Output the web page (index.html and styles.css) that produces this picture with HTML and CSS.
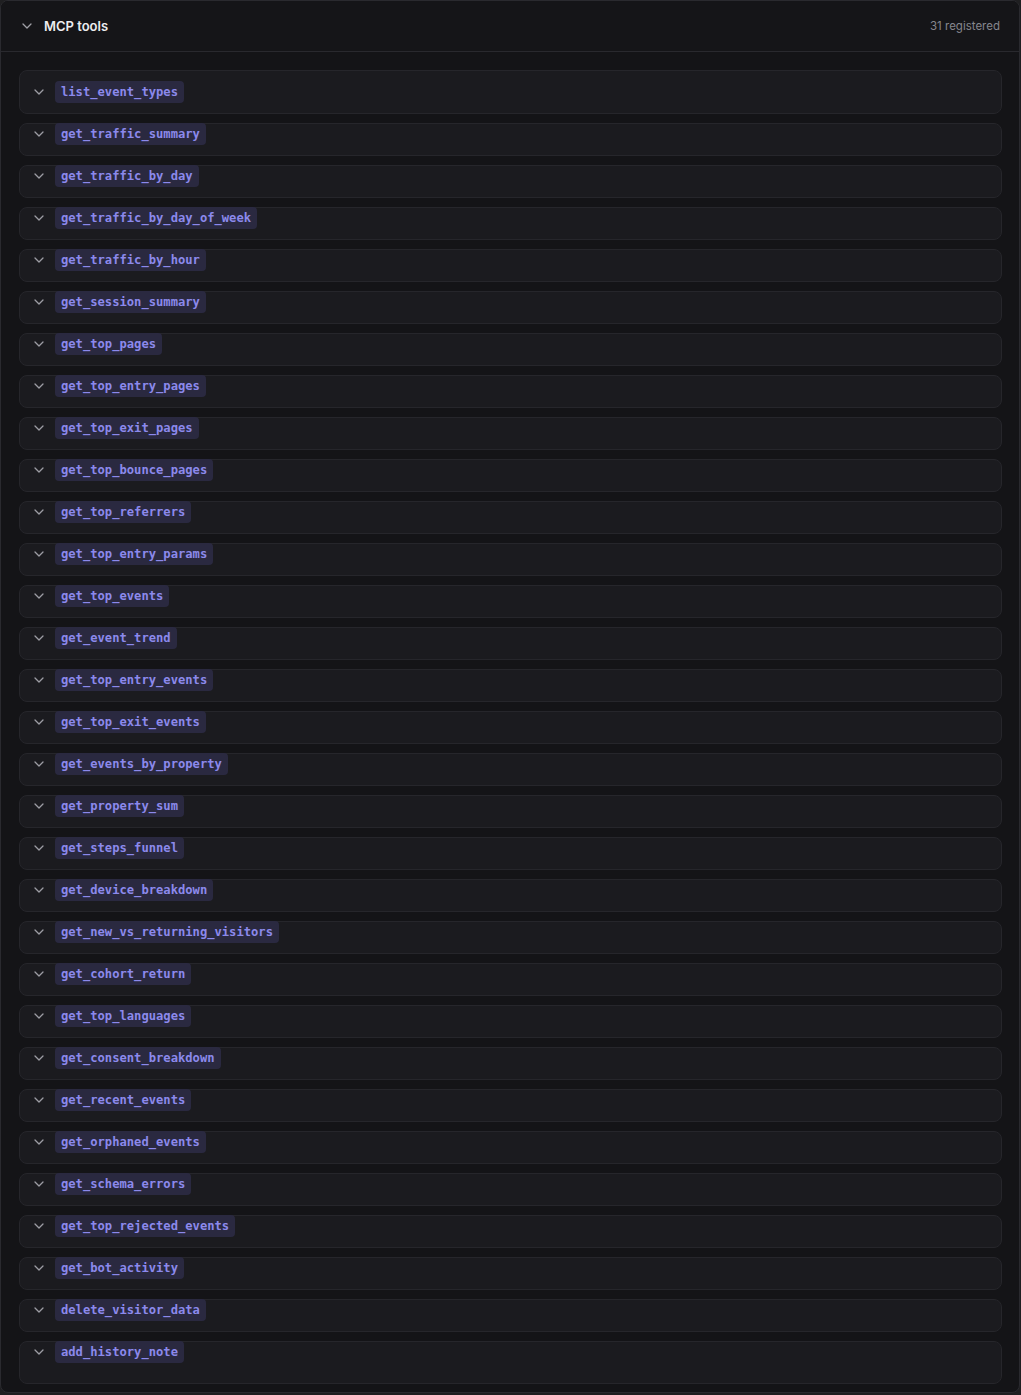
FILE: index.html
```html
<!DOCTYPE html>
<html lang="en">
<head>
<meta charset="utf-8">
<title>MCP tools</title>
<link rel="stylesheet" href="styles.css">
</head>
<body>
<section class="panel">
  <header class="panel-head">
    <svg class="chev" viewBox="0 0 10 6" width="10" height="6"><path d="M1 1l4 4 4-4" fill="none" stroke="currentColor" stroke-width="1.3" stroke-linecap="round" stroke-linejoin="round"/></svg>
    <h2 class="panel-title">MCP tools</h2>
    <span class="panel-count">31 registered</span>
  </header>
  <ul class="tool-list">
    <li class="tool"><div class="tool-row"><svg class="chev" viewBox="0 0 10 6" width="10" height="6"><path d="M1 1l4 4 4-4" fill="none" stroke="currentColor" stroke-width="1.3" stroke-linecap="round" stroke-linejoin="round"/></svg><code class="tool-name">list_event_types</code></div></li>
    <li class="tool"><div class="tool-row"><svg class="chev" viewBox="0 0 10 6" width="10" height="6"><path d="M1 1l4 4 4-4" fill="none" stroke="currentColor" stroke-width="1.3" stroke-linecap="round" stroke-linejoin="round"/></svg><code class="tool-name">get_traffic_summary</code></div></li>
    <li class="tool"><div class="tool-row"><svg class="chev" viewBox="0 0 10 6" width="10" height="6"><path d="M1 1l4 4 4-4" fill="none" stroke="currentColor" stroke-width="1.3" stroke-linecap="round" stroke-linejoin="round"/></svg><code class="tool-name">get_traffic_by_day</code></div></li>
    <li class="tool"><div class="tool-row"><svg class="chev" viewBox="0 0 10 6" width="10" height="6"><path d="M1 1l4 4 4-4" fill="none" stroke="currentColor" stroke-width="1.3" stroke-linecap="round" stroke-linejoin="round"/></svg><code class="tool-name">get_traffic_by_day_of_week</code></div></li>
    <li class="tool"><div class="tool-row"><svg class="chev" viewBox="0 0 10 6" width="10" height="6"><path d="M1 1l4 4 4-4" fill="none" stroke="currentColor" stroke-width="1.3" stroke-linecap="round" stroke-linejoin="round"/></svg><code class="tool-name">get_traffic_by_hour</code></div></li>
    <li class="tool"><div class="tool-row"><svg class="chev" viewBox="0 0 10 6" width="10" height="6"><path d="M1 1l4 4 4-4" fill="none" stroke="currentColor" stroke-width="1.3" stroke-linecap="round" stroke-linejoin="round"/></svg><code class="tool-name">get_session_summary</code></div></li>
    <li class="tool"><div class="tool-row"><svg class="chev" viewBox="0 0 10 6" width="10" height="6"><path d="M1 1l4 4 4-4" fill="none" stroke="currentColor" stroke-width="1.3" stroke-linecap="round" stroke-linejoin="round"/></svg><code class="tool-name">get_top_pages</code></div></li>
    <li class="tool"><div class="tool-row"><svg class="chev" viewBox="0 0 10 6" width="10" height="6"><path d="M1 1l4 4 4-4" fill="none" stroke="currentColor" stroke-width="1.3" stroke-linecap="round" stroke-linejoin="round"/></svg><code class="tool-name">get_top_entry_pages</code></div></li>
    <li class="tool"><div class="tool-row"><svg class="chev" viewBox="0 0 10 6" width="10" height="6"><path d="M1 1l4 4 4-4" fill="none" stroke="currentColor" stroke-width="1.3" stroke-linecap="round" stroke-linejoin="round"/></svg><code class="tool-name">get_top_exit_pages</code></div></li>
    <li class="tool"><div class="tool-row"><svg class="chev" viewBox="0 0 10 6" width="10" height="6"><path d="M1 1l4 4 4-4" fill="none" stroke="currentColor" stroke-width="1.3" stroke-linecap="round" stroke-linejoin="round"/></svg><code class="tool-name">get_top_bounce_pages</code></div></li>
    <li class="tool"><div class="tool-row"><svg class="chev" viewBox="0 0 10 6" width="10" height="6"><path d="M1 1l4 4 4-4" fill="none" stroke="currentColor" stroke-width="1.3" stroke-linecap="round" stroke-linejoin="round"/></svg><code class="tool-name">get_top_referrers</code></div></li>
    <li class="tool"><div class="tool-row"><svg class="chev" viewBox="0 0 10 6" width="10" height="6"><path d="M1 1l4 4 4-4" fill="none" stroke="currentColor" stroke-width="1.3" stroke-linecap="round" stroke-linejoin="round"/></svg><code class="tool-name">get_top_entry_params</code></div></li>
    <li class="tool"><div class="tool-row"><svg class="chev" viewBox="0 0 10 6" width="10" height="6"><path d="M1 1l4 4 4-4" fill="none" stroke="currentColor" stroke-width="1.3" stroke-linecap="round" stroke-linejoin="round"/></svg><code class="tool-name">get_top_events</code></div></li>
    <li class="tool"><div class="tool-row"><svg class="chev" viewBox="0 0 10 6" width="10" height="6"><path d="M1 1l4 4 4-4" fill="none" stroke="currentColor" stroke-width="1.3" stroke-linecap="round" stroke-linejoin="round"/></svg><code class="tool-name">get_event_trend</code></div></li>
    <li class="tool"><div class="tool-row"><svg class="chev" viewBox="0 0 10 6" width="10" height="6"><path d="M1 1l4 4 4-4" fill="none" stroke="currentColor" stroke-width="1.3" stroke-linecap="round" stroke-linejoin="round"/></svg><code class="tool-name">get_top_entry_events</code></div></li>
    <li class="tool"><div class="tool-row"><svg class="chev" viewBox="0 0 10 6" width="10" height="6"><path d="M1 1l4 4 4-4" fill="none" stroke="currentColor" stroke-width="1.3" stroke-linecap="round" stroke-linejoin="round"/></svg><code class="tool-name">get_top_exit_events</code></div></li>
    <li class="tool"><div class="tool-row"><svg class="chev" viewBox="0 0 10 6" width="10" height="6"><path d="M1 1l4 4 4-4" fill="none" stroke="currentColor" stroke-width="1.3" stroke-linecap="round" stroke-linejoin="round"/></svg><code class="tool-name">get_events_by_property</code></div></li>
    <li class="tool"><div class="tool-row"><svg class="chev" viewBox="0 0 10 6" width="10" height="6"><path d="M1 1l4 4 4-4" fill="none" stroke="currentColor" stroke-width="1.3" stroke-linecap="round" stroke-linejoin="round"/></svg><code class="tool-name">get_property_sum</code></div></li>
    <li class="tool"><div class="tool-row"><svg class="chev" viewBox="0 0 10 6" width="10" height="6"><path d="M1 1l4 4 4-4" fill="none" stroke="currentColor" stroke-width="1.3" stroke-linecap="round" stroke-linejoin="round"/></svg><code class="tool-name">get_steps_funnel</code></div></li>
    <li class="tool"><div class="tool-row"><svg class="chev" viewBox="0 0 10 6" width="10" height="6"><path d="M1 1l4 4 4-4" fill="none" stroke="currentColor" stroke-width="1.3" stroke-linecap="round" stroke-linejoin="round"/></svg><code class="tool-name">get_device_breakdown</code></div></li>
    <li class="tool"><div class="tool-row"><svg class="chev" viewBox="0 0 10 6" width="10" height="6"><path d="M1 1l4 4 4-4" fill="none" stroke="currentColor" stroke-width="1.3" stroke-linecap="round" stroke-linejoin="round"/></svg><code class="tool-name">get_new_vs_returning_visitors</code></div></li>
    <li class="tool"><div class="tool-row"><svg class="chev" viewBox="0 0 10 6" width="10" height="6"><path d="M1 1l4 4 4-4" fill="none" stroke="currentColor" stroke-width="1.3" stroke-linecap="round" stroke-linejoin="round"/></svg><code class="tool-name">get_cohort_return</code></div></li>
    <li class="tool"><div class="tool-row"><svg class="chev" viewBox="0 0 10 6" width="10" height="6"><path d="M1 1l4 4 4-4" fill="none" stroke="currentColor" stroke-width="1.3" stroke-linecap="round" stroke-linejoin="round"/></svg><code class="tool-name">get_top_languages</code></div></li>
    <li class="tool"><div class="tool-row"><svg class="chev" viewBox="0 0 10 6" width="10" height="6"><path d="M1 1l4 4 4-4" fill="none" stroke="currentColor" stroke-width="1.3" stroke-linecap="round" stroke-linejoin="round"/></svg><code class="tool-name">get_consent_breakdown</code></div></li>
    <li class="tool"><div class="tool-row"><svg class="chev" viewBox="0 0 10 6" width="10" height="6"><path d="M1 1l4 4 4-4" fill="none" stroke="currentColor" stroke-width="1.3" stroke-linecap="round" stroke-linejoin="round"/></svg><code class="tool-name">get_recent_events</code></div></li>
    <li class="tool"><div class="tool-row"><svg class="chev" viewBox="0 0 10 6" width="10" height="6"><path d="M1 1l4 4 4-4" fill="none" stroke="currentColor" stroke-width="1.3" stroke-linecap="round" stroke-linejoin="round"/></svg><code class="tool-name">get_orphaned_events</code></div></li>
    <li class="tool"><div class="tool-row"><svg class="chev" viewBox="0 0 10 6" width="10" height="6"><path d="M1 1l4 4 4-4" fill="none" stroke="currentColor" stroke-width="1.3" stroke-linecap="round" stroke-linejoin="round"/></svg><code class="tool-name">get_schema_errors</code></div></li>
    <li class="tool"><div class="tool-row"><svg class="chev" viewBox="0 0 10 6" width="10" height="6"><path d="M1 1l4 4 4-4" fill="none" stroke="currentColor" stroke-width="1.3" stroke-linecap="round" stroke-linejoin="round"/></svg><code class="tool-name">get_top_rejected_events</code></div></li>
    <li class="tool"><div class="tool-row"><svg class="chev" viewBox="0 0 10 6" width="10" height="6"><path d="M1 1l4 4 4-4" fill="none" stroke="currentColor" stroke-width="1.3" stroke-linecap="round" stroke-linejoin="round"/></svg><code class="tool-name">get_bot_activity</code></div></li>
    <li class="tool"><div class="tool-row"><svg class="chev" viewBox="0 0 10 6" width="10" height="6"><path d="M1 1l4 4 4-4" fill="none" stroke="currentColor" stroke-width="1.3" stroke-linecap="round" stroke-linejoin="round"/></svg><code class="tool-name">delete_visitor_data</code></div></li>
    <li class="tool"><div class="tool-row"><svg class="chev" viewBox="0 0 10 6" width="10" height="6"><path d="M1 1l4 4 4-4" fill="none" stroke="currentColor" stroke-width="1.3" stroke-linecap="round" stroke-linejoin="round"/></svg><code class="tool-name">add_history_note</code></div></li>
  </ul>
</section>
</body>
</html>
```

FILE: styles.css
```css
* { box-sizing: border-box; }

html, body {
  margin: 0;
  padding: 0;
  background: #1f1f21;
}

body {
  font-family: Inter, "Noto Sans", "Liberation Sans", sans-serif;
  color: #e6e6e9;
}

.panel {
  width: 1020px;
  background: #141417;
  border: 1px solid #2a2a2f;
  border-radius: 8px;
  overflow: hidden;
}

.panel-head {
  display: flex;
  align-items: center;
  height: 51px;
  padding: 0 19px 0 21px;
  border-bottom: 1px solid #29292e;
  background: #151518;
}

.panel-head .chev {
  color: #a0a0a6;
  margin-right: 12px;
}

.panel-title {
  margin: 0;
  font-size: 13px;
  font-weight: 600;
  color: #ececef;
  flex: 1;
}

.panel-count {
  font-size: 11.5px;
  color: #86868d;
}

.tool-list {
  list-style: none;
  margin: 0;
  padding: 18px 17px 8px 18px;
  display: flex;
  flex-direction: column;
  gap: 9px;
}

.tool {
  border: 1px solid #26262b;
  border-radius: 8px;
  background: #1b1b1f;
  padding: 0 14px 10px;
}

.tool:first-child {
  padding-top: 10px;
  padding-bottom: 10px;
}

.tool:last-child {
  padding-bottom: 20px;
}

.tool-row {
  display: flex;
  align-items: center;
  height: 22px;
}

.tool .chev {
  color: #9d9da4;
  margin-right: 11px;
  flex: none;
}

.tool:not(:first-child) .tool-row {
  margin-top: -1px;
}

.tool-name {
  display: inline-block;
  height: 22px;
  line-height: 22px;
  padding: 0 6px;
  border-radius: 4px;
  background: #2a2940;
  color: #8c89ec;
  font-family: "DejaVu Sans Mono", "Liberation Mono", monospace;
  font-weight: 700;
  font-size: 12.15px;
}
```
